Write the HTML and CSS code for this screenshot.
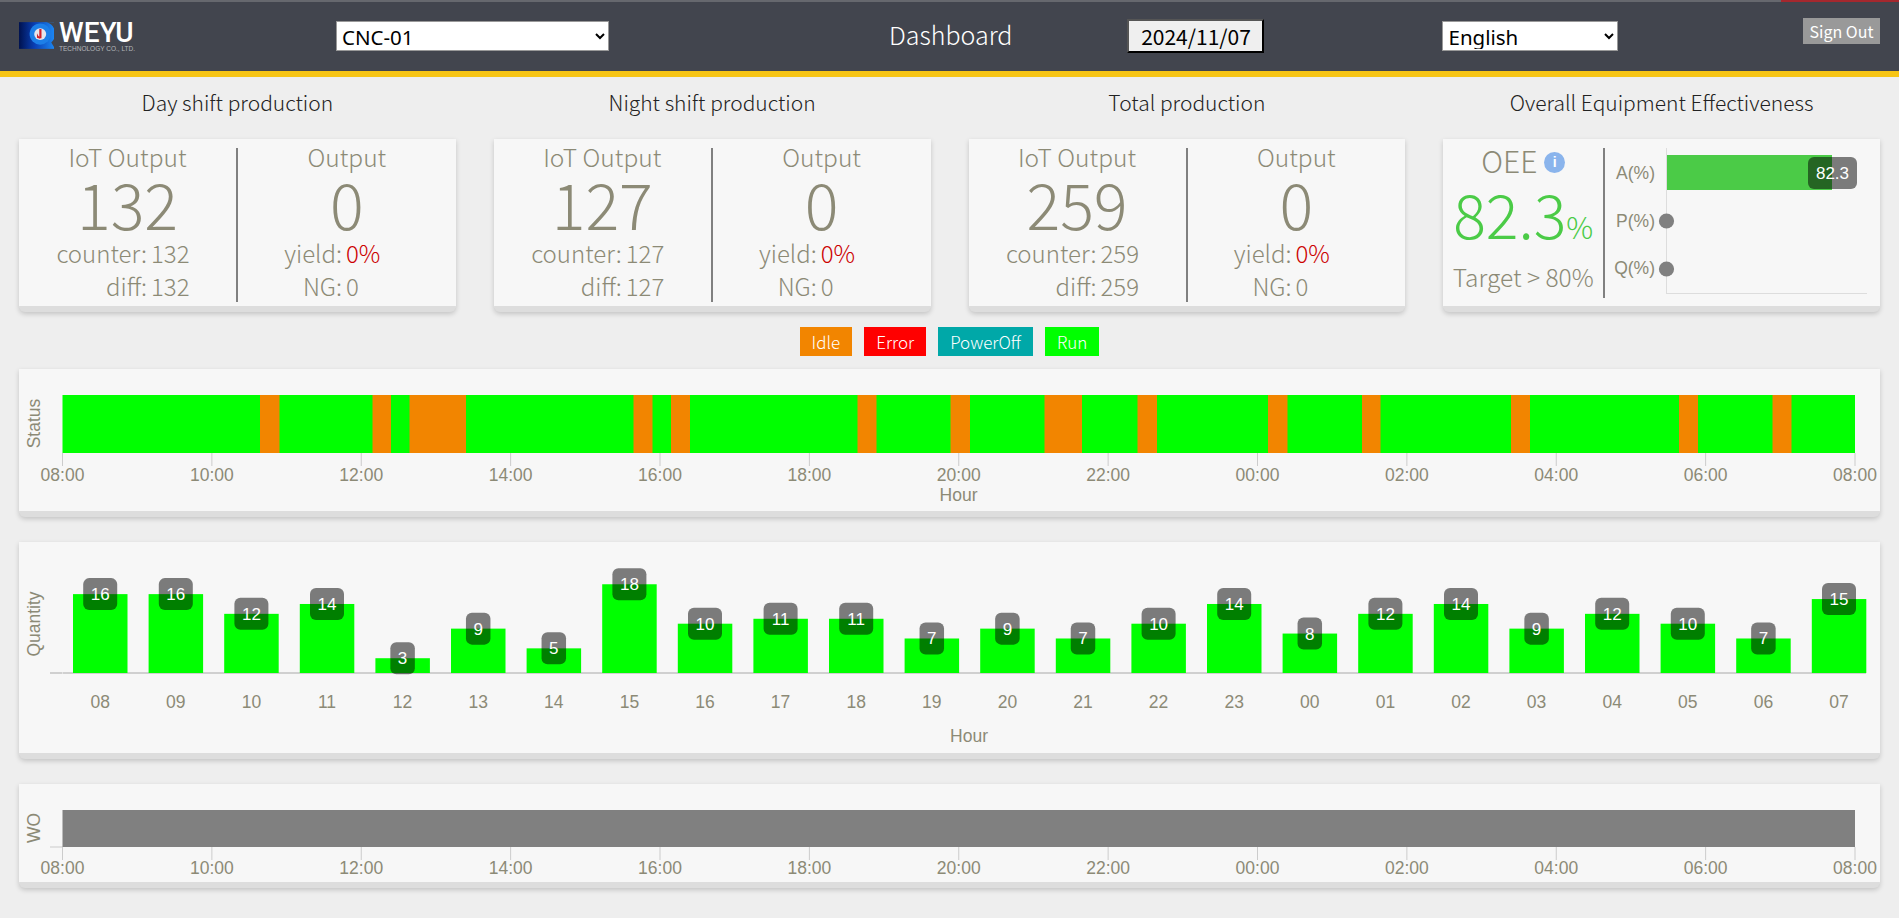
FILE: index.html
```html
<!DOCTYPE html>
<html lang="en">
<head>
    <meta charset="UTF-8">
    <link rel="stylesheet" href="styles.css">
    <title>Dashboard</title>
</head>
<body>

    <header class="topbar">
        <span class="load-strip"></span>
        <div class="logo">
            <svg class="logo-mark" width="38" height="29" viewBox="0 0 38 29">
                <defs>
                    <linearGradient id="logo-fade" x1="0" x2="1" y1="0" y2="0">
                        <stop offset="0" stop-color="#00124f"/>
                        <stop offset="0.45" stop-color="#0a3fb5"/>
                        <stop offset="1" stop-color="#1c86f2"/>
                    </linearGradient>
                </defs>
                <rect width="38" height="29" fill="url(#logo-fade)"/>
                <path d="M30 0 A 13 13 0 0 1 35 22 L38 27 L38 0 Z" fill="#42454e"/>
                <circle cx="23" cy="13" r="11.5" fill="#1d7fe8"/>
                <circle cx="23" cy="13" r="6.5" fill="#e8e6ea"/>
                <rect x="22" y="7.5" width="2.4" height="10" fill="#d3202a"/>
                <path d="M19.5 12 L19.5 17 L23 18 L23 16 L21 15 Z" fill="#d3202a"/>
            </svg>
            <div class="logo-text">
                <div class="logo-name">WEYU</div>
                <div class="logo-sub">TECHNOLOGY CO., LTD.</div>
            </div>
        </div>
        <select class="machine-select">
            <option>CNC-01</option>
            <option>CNC-02</option>
        </select>
        <div class="page-title">Dashboard</div>
        <button class="date-button">2024/11/07</button>
        <select class="lang-select">
            <option>English</option>
        </select>
        <button class="sign-out">Sign Out</button>
    </header>

    <main class="content">
        <div class="card-row titles">
            <h2>Day shift production</h2>
            <h2>Night shift production</h2>
            <h2>Total production</h2>
            <h2>Overall Equipment Effectiveness</h2>
        </div>

        <div class="card-row">
            <section class="card prod-card">
                <div class="prod-col iot-col">
                    <div class="prod-label">IoT Output</div>
                    <div class="prod-number">132</div>
                    <div class="stat-row"><span>counter:</span><span>132</span></div>
                    <div class="stat-row"><span>diff:</span><span>132</span></div>
                </div>
                <div class="prod-col output-col">
                    <div class="prod-label">Output</div>
                    <div class="prod-number">0</div>
                    <div class="stat-row"><span>yield:</span><span class="bad">0%</span></div>
                    <div class="stat-row"><span>NG:</span><span>0</span></div>
                </div>
            </section>

            <section class="card prod-card">
                <div class="prod-col iot-col">
                    <div class="prod-label">IoT Output</div>
                    <div class="prod-number">127</div>
                    <div class="stat-row"><span>counter:</span><span>127</span></div>
                    <div class="stat-row"><span>diff:</span><span>127</span></div>
                </div>
                <div class="prod-col output-col">
                    <div class="prod-label">Output</div>
                    <div class="prod-number">0</div>
                    <div class="stat-row"><span>yield:</span><span class="bad">0%</span></div>
                    <div class="stat-row"><span>NG:</span><span>0</span></div>
                </div>
            </section>

            <section class="card prod-card">
                <div class="prod-col iot-col">
                    <div class="prod-label">IoT Output</div>
                    <div class="prod-number">259</div>
                    <div class="stat-row"><span>counter:</span><span>259</span></div>
                    <div class="stat-row"><span>diff:</span><span>259</span></div>
                </div>
                <div class="prod-col output-col">
                    <div class="prod-label">Output</div>
                    <div class="prod-number">0</div>
                    <div class="stat-row"><span>yield:</span><span class="bad">0%</span></div>
                    <div class="stat-row"><span>NG:</span><span>0</span></div>
                </div>
            </section>

            <section class="card oee-card">
                <div class="oee-summary">
                    <div class="oee-title">OEE <span class="info-icon">i</span></div>
                    <div class="oee-value">82.3<small>%</small></div>
                    <div class="oee-target">Target &gt; 80%</div>
                </div>
                <div class="oee-chart" id="oee-chart"></div>
            </section>
        </div>

        <div class="legend">
            <span class="legend-item idle">Idle</span>
            <span class="legend-item error">Error</span>
            <span class="legend-item power-off">PowerOff</span>
            <span class="legend-item run">Run</span>
        </div>

        <section class="card chart-card" id="status-chart"></section>
        <section class="card chart-card" id="quantity-chart"></section>
        <section class="card chart-card" id="wo-chart"></section>
    </main>

    <script src="script.js"></script>
</body>
</html>
```

FILE: styles.css
```css
body {
    margin: 0;
    background: #eeeeee;
    font-family: "Noto Sans CJK TC", "Noto Sans", sans-serif;
    font-weight: 300;
    color: #8c8a76;
}

.topbar {
    position: relative;
    display: flex;
    align-items: center;
    box-sizing: border-box;
    height: 77px;
    padding: 0 19px;
    background: #42454e;
    border-top: 2px solid #66686e;
    border-bottom: 6px solid #f7c515;
}

.load-strip {
    position: absolute;
    top: -2px;
    right: 0;
    width: 118px;
    height: 2px;
    background: #a5282e;
}

.logo {
    display: flex;
    gap: 5px;
    width: 116px;
}

.logo-text {
    padding-top: 1px;
}

.logo-name {
    font-family: Roboto, sans-serif;
    font-weight: 500;
    font-size: 28px;
    line-height: 22px;
    color: #ffffff;
}

.logo-sub {
    font-family: "Liberation Sans", sans-serif;
    font-size: 6.5px;
    line-height: 9px;
    color: #b5b6ba;
    white-space: nowrap;
}

.machine-select,
.lang-select {
    height: 30px;
    margin-bottom: 2px;
    padding: 0 0 1px 1px;
    background: #ffffff;
    border: 1px solid #999999;
    font-family: "Noto Sans", sans-serif;
    font-size: 20.5px;
    color: #000000;
}

.machine-select {
    width: 273px;
    margin-left: 201px;
}

.page-title {
    margin-left: 280px;
    margin-bottom: 6px;
    font-size: 25px;
    color: #ffffff;
}

.date-button {
    width: 137px;
    height: 34px;
    margin-left: 115px;
    margin-bottom: 2px;
    padding: 0 0 3px;
    background: #efefef;
    border: 2px solid;
    border-color: #555555 #000000 #000000 #555555;
    font-family: "Noto Sans CJK TC", sans-serif;
    font-size: 21px;
    color: #000000;
}

.lang-select {
    width: 176px;
    margin-left: 178px;
}

.sign-out {
    width: 77px;
    height: 26px;
    margin-left: auto;
    margin-bottom: 11px;
    padding: 0;
    background: #999999;
    border: none;
    font-family: "Noto Sans CJK TC", sans-serif;
    font-size: 16px;
    color: #ffffff;
}

.content {
    padding: 0 19px;
}

.card-row {
    display: grid;
    grid-template-columns: repeat(4, 1fr);
    gap: 38px;
}

.titles {
    box-sizing: border-box;
    height: 62px;
    padding-bottom: 13px;
    align-items: center;
    text-align: center;
}

.titles h2 {
    margin: 0;
    font-size: 21px;
    font-weight: 300;
    color: #222222;
}

.card {
    box-sizing: border-box;
    background: #f7f7f7;
    border-bottom: 6px solid #dddddd;
    border-radius: 0 0 6px 6px;
    box-shadow: 0 2px 5px rgba(0, 0, 0, 0.18);
}

.prod-card,
.oee-card {
    display: grid;
    height: 173px;
    padding: 9px 0 8px;
}

.prod-card {
    grid-template-columns: 217px 1fr;
}

.prod-col {
    text-align: center;
}

.output-col {
    border-left: 2px solid #808080;
}

.prod-label {
    font-size: 24.5px;
    line-height: 18px;
}

.prod-number {
    margin-bottom: -4px;
    font-size: 63px;
    line-height: 74px;
}

.stat-row {
    display: grid;
    column-gap: 4px;
    font-size: 24px;
    line-height: 33px;
    text-align: left;
}

.iot-col .stat-row {
    grid-template-columns: 128px 1fr;
}

.output-col .stat-row {
    grid-template-columns: 104px 1fr;
}

.stat-row span:first-child {
    text-align: right;
}

.bad {
    color: #cc0000;
}

.oee-card {
    grid-template-columns: 160px 1fr;
}

.oee-summary {
    text-align: center;
}

.oee-title {
    font-size: 30px;
    line-height: 25px;
}

.info-icon {
    display: inline-block;
    width: 21px;
    height: 21px;
    border-radius: 50%;
    background: #8ab4ec;
    font-family: "Liberation Sans", sans-serif;
    font-size: 14px;
    font-weight: bold;
    line-height: 21px;
    color: #ffffff;
    vertical-align: 6px;
}

.oee-value {
    font-size: 61px;
    line-height: 79px;
    color: #4bcb47;
}

.oee-value small {
    font-size: 30px;
}

.oee-target {
    margin-top: -4px;
    font-size: 24.5px;
    line-height: 30px;
}

.oee-chart {
    border-left: 2px solid #808080;
}

.oee-chart svg {
    margin-left: -1px;
}

.legend {
    display: flex;
    justify-content: center;
    gap: 12px;
    margin: 15px 0 13px;
}

.legend-item {
    padding: 0 12px;
    font-size: 17px;
    line-height: 29px;
    color: #ffffff;
}

.idle {
    background: #f28500;
}

.error {
    background: #ff0000;
}

.power-off {
    background: #00a8a8;
}

.run {
    background: #00ff00;
}

.chart-card {
    margin-bottom: 25px;
}

.chart-card svg,
.oee-chart svg {
    display: block;
}

.chart-text {
    font-family: "Liberation Sans", sans-serif;
    font-size: 17.5px;
    fill: #8c8a76;
}

.chart-value {
    font-family: "Liberation Sans", sans-serif;
    font-size: 17px;
    fill: #ffffff;
}
```

FILE: script.js
```js
const GREEN = '#00ff00';
const ORANGE = '#f28500';
const GREY = '#808080';
const AXIS = '#cccccc';
const WIDTH = 1861;

// timeline runs from x=43.5 to x=1836, 08:00 to 08:00
const LINE_LEFT = 43.5;
const LINE_RIGHT = 1836;

const idleSpans = [
    [241, 260.5], [353.5, 372], [390.5, 447], [614.5, 633.5], [652, 671],
    [838.5, 857.5], [931.5, 951], [1025.5, 1063], [1118.5, 1138], [1249, 1268.5],
    [1343, 1361.5], [1492, 1511], [1660, 1679], [1753.5, 1772.5]
];

const hourlyValues = [16, 16, 12, 14, 3, 9, 5, 18, 10, 11, 11, 7, 9, 7, 10, 14, 8, 12, 14, 9, 12, 10, 7, 15];
const hourlyLabels = ['08', '09', '10', '11', '12', '13', '14', '15', '16', '17', '18', '19', '20', '21', '22', '23', '00', '01', '02', '03', '04', '05', '06', '07'];

function text(x, y, value, anchor = 'middle', cls = 'chart-text') {
    return `<text class="${cls}" x="${x}" y="${y}" text-anchor="${anchor}">${value}</text>`;
}

function sideLabel(y, value) {
    return `<text class="chart-text" text-anchor="middle" transform="translate(21 ${y}) rotate(-90)">${value}</text>`;
}

function rect(x, y, w, h, fill, rx = 0) {
    return `<rect x="${x}" y="${y}" width="${w}" height="${h}" fill="${fill}" rx="${rx}"/>`;
}

function timeAxis(top, labelY) {
    let out = '';
    const step = (LINE_RIGHT - LINE_LEFT) / 12;
    for (let i = 0; i <= 12; i++) {
        const x = LINE_LEFT + step * i;
        const hour = String((8 + i * 2) % 24).padStart(2, '0');
        out += rect(x - 0.5, top, 1, 13, AXIS);
        out += text(x, labelY, `${hour}:00`);
    }
    return out;
}

function svg(width, height, body) {
    return `<svg width="${width}" height="${height}" viewBox="0 0 ${width} ${height}">${body}</svg>`;
}

function drawStatus() {
    let body = sideLabel(54.5, 'Status');
    body += rect(LINE_LEFT, 26, LINE_RIGHT - LINE_LEFT, 58, GREEN);
    idleSpans.forEach(([from, to]) => {
        body += rect(from, 26, to - from, 58, ORANGE);
    });
    body += timeAxis(84, 112);
    body += text(939.5, 131.5, 'Hour');
    document.getElementById('status-chart').innerHTML = svg(WIDTH, 142, body);
}

function drawQuantity() {
    const base = 131;
    const unit = 4.93;
    let body = sideLabel(82, 'Quantity');
    body += rect(31, base - 0.5, 1816, 1, '#aaaaaa');
    body += rect(43, base - 0.5, 1, 1, '#f7f7f7');
    hourlyValues.forEach((value, i) => {
        const x = 54 + i * 75.6;
        const mid = x + 27.2;
        const h = value * unit;
        const boxW = value > 9 ? 34 : 24.5;
        body += rect(x, base - h, 54.5, h, GREEN);
        body += rect(mid - boxW / 2, base - h - 16, boxW, 32, 'rgba(0,0,0,0.5)', 6);
        body += text(mid, base - h + 6, value, 'middle', 'chart-value');
        body += text(mid, 166, hourlyLabels[i]);
    });
    body += text(950, 200, 'Hour');
    document.getElementById('quantity-chart').innerHTML = svg(WIDTH, 211, body);
}

function drawWo() {
    let body = sideLabel(44, 'WO');
    body += rect(31, 62.5, 13, 1, AXIS);
    body += rect(LINE_LEFT, 26, LINE_RIGHT - LINE_LEFT, 37, GREY);
    body += timeAxis(63, 90);
    document.getElementById('wo-chart').innerHTML = svg(WIDTH, 98, body);
}

function drawOee() {
    let body = rect(62, 0, 1, 145, '#dddddd') + rect(62, 145, 201, 1, '#dddddd');
    body += rect(63, 7, 165, 35, '#4bcb47');
    body += rect(204, 9, 49, 32, 'rgba(0,0,0,0.5)', 6);
    body += text(228.5, 31, '82.3', 'middle', 'chart-value');
    body += text(51, 31, 'A(%)', 'end');
    body += text(51, 79, 'P(%)', 'end');
    body += text(51, 126, 'Q(%)', 'end');
    body += `<circle cx="62.5" cy="73" r="7.6" fill="${GREY}"/>`;
    body += `<circle cx="62.5" cy="121" r="7.6" fill="${GREY}"/>`;
    document.getElementById('oee-chart').innerHTML = svg(274, 150, body);
}

drawStatus();
drawQuantity();
drawWo();
drawOee();
```
